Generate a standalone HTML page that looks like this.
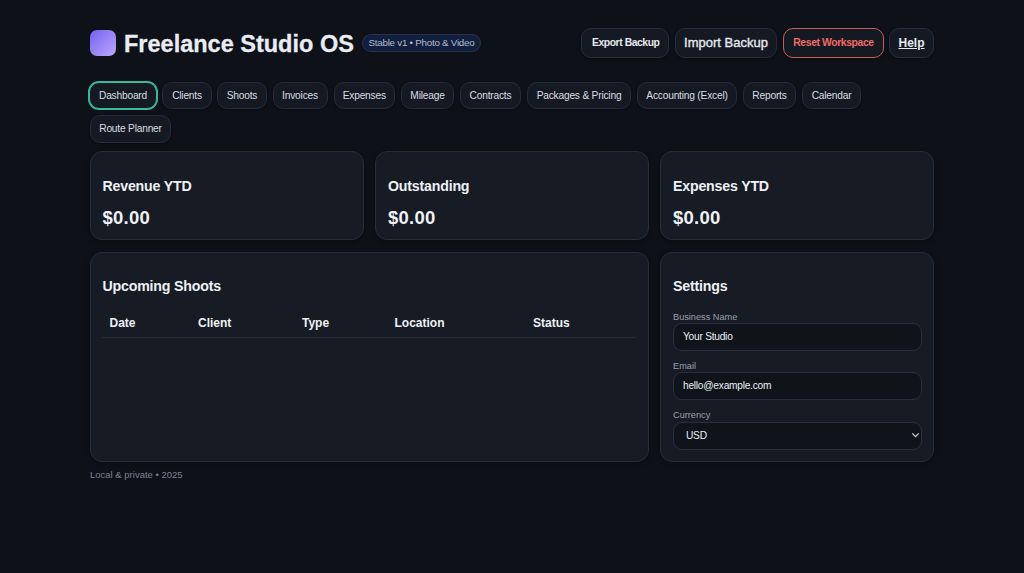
<!DOCTYPE html>
<html>
<head>
<meta charset="utf-8">
<style>
*{box-sizing:border-box;margin:0;padding:0}
html,body{width:1024px;height:573px;overflow:hidden;background:#0e1117;font-family:"Liberation Sans",sans-serif;color:#e6e9ef}
.a{position:absolute}
.logo{left:90px;top:30px;width:26px;height:26px;border-radius:7px;background:linear-gradient(135deg,#7662f2 0%,#bba6fd 100%)}
.title{left:124px;top:30px;font-size:23.5px;-webkit-text-stroke:0.3px #e9edf3;font-weight:bold;line-height:28px;white-space:nowrap;color:#e9edf3}
.badge{left:362px;top:34px;width:119px;height:18px;border-radius:9px;background:#121f3a;border:1px solid #223356;color:#aebbd6;font-size:9.8px;letter-spacing:-0.25px;padding-bottom:1.3px;display:flex;align-items:center;justify-content:center;white-space:nowrap}
.btn{display:flex;align-items:center;justify-content:center;white-space:nowrap;background:#151a22;border:1px solid #262c37;border-radius:8px;color:#e6e9ef}
.hb{top:28px;height:30px;border-radius:10px;border-color:#252d3e;box-shadow:0 1px 3px rgba(0,0,0,.35)}
.nav{height:27.5px;border-radius:10px;border-color:#242c3b;box-shadow:0 1px 2px rgba(0,0,0,.35);font-size:10.2px;letter-spacing:-0.2px;color:#d9dde3;padding-bottom:0}
.card{background:#171b23;border:1px solid #252d3d;border-radius:12px;box-shadow:0 1px 4px rgba(0,0,0,.4)}
.h3{font-size:14.2px;letter-spacing:-0.2px;font-weight:bold;line-height:16px;white-space:nowrap;color:#eef1f5}
.val{font-size:18.5px;letter-spacing:0.25px;font-weight:bold;line-height:20px;white-space:nowrap;color:#eef1f5}
.th{font-size:12px;font-weight:bold;line-height:14px;white-space:nowrap;color:#eef1f5}
.lbl{font-size:9.2px;line-height:11px;color:#98a0ad;white-space:nowrap}
.inp{left:673px;width:249px;height:28px;background:#0f131a;border:1px solid #272f40;border-radius:9px;font-size:10.2px;letter-spacing:-0.25px;color:#eceff4;display:flex;align-items:center;padding-left:9px;padding-bottom:0.5px;white-space:nowrap}
.foot{left:90px;top:469px;font-size:9.5px;line-height:12px;color:#7a818e;white-space:nowrap}
</style>
</head>
<body>
<div class="a logo"></div>
<div class="a title">Freelance Studio OS</div>
<div class="a badge">Stable v1 • Photo &amp; Video</div>

<div class="a btn hb" style="left:581px;width:88px;font-size:10.4px;letter-spacing:-0.45px;font-weight:bold;padding-bottom:0.5px;padding-left:1.5px">Export Backup</div>
<div class="a btn hb" style="left:675px;width:102px;font-size:13px;padding-bottom:1px;-webkit-text-stroke:0.35px #e6e9ef">Import Backup</div>
<div class="a btn hb" style="left:783px;width:101px;font-size:10.4px;letter-spacing:-0.4px;font-weight:bold;color:#f06b63;border:1.5px solid #c45f58;padding-bottom:1px">Reset Workspace</div>
<div class="a btn hb" style="left:889px;width:45px;font-size:12px;font-weight:bold;text-decoration:underline">Help</div>

<div class="a btn nav" style="left:89px;top:81.5px;width:68px;border:1px solid #3bb99d;box-shadow:0 0 0 1px #3bb99d;border-radius:10px">Dashboard</div>
<div class="a btn nav" style="left:162px;top:81.5px;width:50px">Clients</div>
<div class="a btn nav" style="left:217px;top:81.5px;width:50px">Shoots</div>
<div class="a btn nav" style="left:272.5px;top:81.5px;width:55px">Invoices</div>
<div class="a btn nav" style="left:333.5px;top:81.5px;width:61.5px">Expenses</div>
<div class="a btn nav" style="left:401px;top:81.5px;width:53px">Mileage</div>
<div class="a btn nav" style="left:460px;top:81.5px;width:61px">Contracts</div>
<div class="a btn nav" style="left:527px;top:81.5px;width:104px">Packages &amp; Pricing</div>
<div class="a btn nav" style="left:637px;top:81.5px;width:100px">Accounting (Excel)</div>
<div class="a btn nav" style="left:743px;top:81.5px;width:53px">Reports</div>
<div class="a btn nav" style="left:802px;top:81.5px;width:59px">Calendar</div>
<div class="a btn nav" style="left:90px;top:115px;width:81px;padding-bottom:0.5px">Route Planner</div>

<div class="a card" style="left:90px;top:151px;width:273.5px;height:88.5px"></div>
<div class="a card" style="left:375.3px;top:151px;width:273.5px;height:88.5px"></div>
<div class="a card" style="left:660.3px;top:151px;width:273.7px;height:88.5px"></div>
<div class="a h3" style="left:102.5px;top:178px">Revenue YTD</div>
<div class="a h3" style="left:388px;top:178px">Outstanding</div>
<div class="a h3" style="left:673px;top:178px">Expenses YTD</div>
<div class="a val" style="left:102.5px;top:208px">$0.00</div>
<div class="a val" style="left:388px;top:208px">$0.00</div>
<div class="a val" style="left:673px;top:208px">$0.00</div>

<div class="a card" style="left:90px;top:252px;width:559px;height:210px"></div>
<div class="a h3" style="left:102.5px;top:278px">Upcoming Shoots</div>
<div class="a th" style="left:109.5px;top:316px">Date</div>
<div class="a th" style="left:198px;top:316px">Client</div>
<div class="a th" style="left:302px;top:316px">Type</div>
<div class="a th" style="left:394.5px;top:316px">Location</div>
<div class="a th" style="left:533px;top:316px">Status</div>
<div class="a" style="left:102px;top:337px;width:534px;height:1px;background:#252a35"></div>

<div class="a card" style="left:660.3px;top:252px;width:273.7px;height:210px"></div>
<div class="a h3" style="left:673px;top:278px">Settings</div>
<div class="a lbl" style="left:673px;top:312px">Business Name</div>
<div class="a inp" style="top:322.5px">Your Studio</div>
<div class="a lbl" style="left:673px;top:361px">Email</div>
<div class="a inp" style="top:372px">hello@example.com</div>
<div class="a lbl" style="left:673px;top:410px">Currency</div>
<div class="a inp" style="top:421.5px;padding-left:12px">USD</div>
<svg class="a" style="left:911px;top:432px" width="9" height="7" viewBox="0 0 9 7"><path d="M1.3 1.4 L4.5 4.7 L7.7 1.4" fill="none" stroke="#cfd3da" stroke-width="1.25"/></svg>

<div class="a foot">Local &amp; private • 2025</div>
</body>
</html>
